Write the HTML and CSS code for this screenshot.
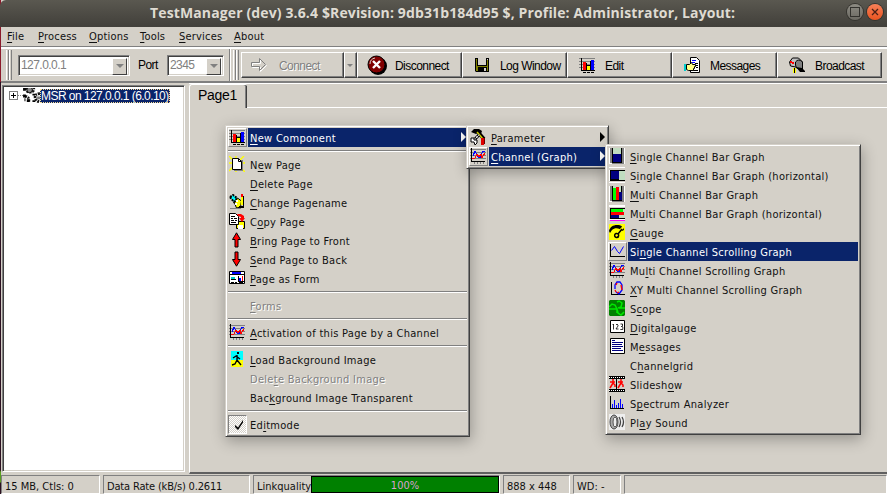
FILE: index.html
```html
<!DOCTYPE html>
<html lang="en">
<head>
<meta charset="utf-8">
<title>TestManager</title>
<link rel="stylesheet" href="styles.css">
</head>
<body>
<svg class="defs" width="0" height="0">
  <symbol id="bars" viewBox="0 0 16 16"><path fill="#808080" d="M0 1h16v1H0zM0 4h16v1H0zM0 7h16v1H0zM0 10h16v1H0z"/><path d="M2 1h1v12h13v1H2zM4 15h3v1H4zM8 15h3v1H8zM12 15h3v1h-3z"/><path fill="#f00" d="M4 5h3v8H4z"/><path fill="#ff0" d="M8 9h3v4H8z"/><path fill="#00f" d="M12 3h3v10h-3z"/><path d="M7 6h1v7H7zM8 8h3v1H8zM11 4h1v9h-1z"/></symbol>
  <symbol id="newpage" viewBox="0 0 16 16"><path stroke="#ff0" stroke-width="1.400" d="M0 0l16 16M15 0L0 15M7 0v16M0 7h16"/><path fill="#808080" d="M5 4h9v11H5z"/><path fill="#fff" stroke="#000" d="M3.500 2.500h6l3 3v8h-9z"/><path fill="none" stroke="#000" d="M9.500 2.500v3h3"/></symbol>
  <symbol id="rename" viewBox="0 0 16 16"><path fill="#ff0" stroke="#000" d="M5.500 9l3-5 4 3-1 6-4 1z"/><path fill="#0ff" stroke="#000" stroke-width="2" stroke-dasharray="2 1" d="M1 3l3-2 4 3-3 4z"/><path fill="#fff" d="M7 6h2v2H7zM6 9h2v2H6z"/><path fill="#f00" d="M12 0h2v3h-2z"/><path fill="#ff0" d="M12 3h2v8h-2z"/><path d="M14 2h1v12h-2v-2h1zM10 12h3v2h-3z"/><path fill="#808080" d="M1 14h11v1H1z"/></symbol>
  <symbol id="copy" viewBox="0 0 16 16"><path fill="#ff0" stroke="#000" d="M7.500 8.500h8v7h-8z"/><path fill="#fff" d="M9 12h5v4H9z"/><path fill="#fff" stroke="#000" d="M.5.5h6l3 3v8h-9z"/><path d="M2 3h4v1H2zM2 5h2v1H2zM5 5h3v1H5zM2 7h3v1H2zM6 7h2v1H6zM2 9h5v1H2z"/><path fill="#f00" d="M8 1h4l3 2v2h1l-3 4-3-4h2V4L9 3z"/></symbol>
  <symbol id="up" viewBox="0 0 16 16"><path fill="#f00" stroke="#000" d="M7.500.8l4 6.700H9V15H6V7.500H3.500z"/></symbol>
  <symbol id="down" viewBox="0 0 16 16"><path fill="#f00" stroke="#000" d="M7.500 15.200l4-6.700H9V1H6v7.500H3.500z"/></symbol>
  <symbol id="form" viewBox="0 0 16 16"><path fill="#fff" stroke="#000" d="M.5 1.500h15v12H.5z"/><path fill="#00f" d="M3 2h9v2H3z"/><path d="M1 4h14v1H1zM2 9h5v1H2zM9 6h1v5h5v1H9zM2 12h3v1H2zM6 12h2v1H6zM10 12h4v1h-4z"/><path fill="#0cc" d="M2 7h4v2H2z"/><path fill="#00f" d="M10 8h2v3h-2z"/><path fill="#f00" d="M13 6h1v5h-1z"/></symbol>
  <symbol id="graph" viewBox="0 0 16 16"><path fill="#808080" d="M0 1h16v1H0zM0 4h16v1H0zM0 7h16v1H0zM0 10h16v1H0zM4 14h1v2H4zM7 14h1v2H7zM10 14h1v2h-1zM13 14h1v2h-1z"/><path d="M1 0h1v13h13v1H1z"/><g class="crisp" fill="none"><path stroke="#00f" d="M3 8l2-5 3 6 2 1 3-7h2"/><path stroke="#f00" d="M2 11l3-1 2-4 2 3 2-3 1 4 3-5"/></g></symbol>
  <symbol id="walk" viewBox="0 0 16 16"><path fill="#0ff" d="M2 0h12v9H2z"/><path fill="#ff0" d="M2 9h12v7H2z"/><path d="M8 1h2v2H8z"/><path fill="none" stroke="#000" stroke-width="1.400" d="M8 4v5l4 5M8 9l-2 4-3 1M4 7l3-2 4 3"/></symbol>
  <symbol id="check" viewBox="0 0 16 16"><path d="M6 9l3 2.500 5-7.500v2.500L9 14 6 11z"/></symbol>
  <symbol id="tools" viewBox="0 0 16 16"><path d="M1 3l3-3h5l3 2-1 3-2-2-3 2z"/><path stroke="#000" stroke-width="3.500" d="M7 2l7 8"/><path stroke="#cc0" stroke-width="1.500" d="M7 3l6 7"/><path stroke="#000" stroke-width="3" d="M3 12l6-6"/><path stroke="#fff" stroke-width="1.500" stroke-dasharray="2 1" d="M2 13l7-7"/><path fill="#fff" stroke="#000" d="M1 9h3v2h3v3l-2 2-1-3H1z"/><path fill="#d00" d="M11 9h3v7h-3z"/><path fill="#600" d="M14 9h1v6h-1z"/></symbol>
  <symbol id="sbar" viewBox="0 0 16 16"><path fill="#fff" d="M0 0h16v16H0z"/><path fill="#808080" d="M1 0h14v16H3v-1H1z"/><path d="M3 0h10v15H3z"/><path fill="#c0dcc0" d="M4 0h8v6H4z"/><path fill="#000080" d="M4 6h8v8H4z"/></symbol>
  <symbol id="sbarh" viewBox="0 0 16 16"><path fill="#fff" d="M0 0h16v16H0z"/><path fill="#d4d0c8" d="M0 1h16v2H0zM0 14h16v1H0z"/><path d="M1 3h15v11H1z"/><path fill="#000080" d="M2 4h8v8H2z"/><path fill="#c0dcc0" d="M10 4h6v9h-6z"/></symbol>
  <symbol id="mbar" viewBox="0 0 16 16"><path fill="#fff" d="M0 0h16v16H0z"/><path fill="#808080" d="M1 0h14v16H3v-1H1z"/><path d="M3 0h10v15H3z"/><path fill="#c0dcc0" d="M4 0h8v6H4z"/><path fill="#0f0" d="M4 2h3v12H4z"/><path fill="#f00" d="M7 1h3v13H7z"/><path fill="#000080" d="M10 6h3v8h-3z"/></symbol>
  <symbol id="mbarh" viewBox="0 0 16 16"><path fill="#fff" d="M0 0h16v2H0z"/><path d="M1 3h15v11H1z"/><path fill="#c0dcc0" d="M10 4h6v9h-6z"/><path fill="#0f0" d="M2 4h12v3H2z"/><path fill="#f00" d="M2 7h13v3H2z"/><path fill="#000080" d="M2 10h8v3H2z"/><path fill="#fff" d="M0 14h16v1H0z"/><path fill="#f0f" d="M1 15h15v1H1z"/></symbol>
  <symbol id="gauge" viewBox="0 0 16 16"><path fill="#ff0" d="M0 0h16v16H0z"/><path d="M0 7C1 3 4 1 8 1s7 2 7 5l-2 1c-2-3-7-4-10-1L1 9z"/><path stroke="#ff0" stroke-width="2" d="M9 9l6-7"/><path fill="none" stroke="#000" stroke-width="1.500" d="M9 10l4-5M9 10a2 2 0 1 0 .1.100M9 12v2"/></symbol>
  <symbol id="line" viewBox="0 0 16 16"><path d="M1 1h1v12h14v1H1z"/><path fill="none" stroke="#00f" d="M2.500 7.500l3-4 3 5 2 2 4-7"/></symbol>
  <symbol id="xy" viewBox="0 0 16 16"><path d="M2 1h1v12h13v1H2z"/><path fill="none" stroke="#00f" stroke-width="1.300" d="M6 8V4l2-3h3l2 3v5l-3 4-3-2"/><path fill="none" stroke="#f00" stroke-width="1.300" d="M6 9l1 2M7 4l1-2M12 4l1 5M8 12l2-1"/></symbol>
  <symbol id="scope" viewBox="0 0 16 16"><path fill="#008000" d="M1 0h14l1 1v14l-1 1H1l-1-1V1z"/><path fill="none" stroke="#00e800" stroke-width="1.500" d="M0 7l3-3 3 1 2 4 1 4 3 2 3-3M8 2l2-1 3 2-1 4-3 1M0 9h8v4M10 8h6"/></symbol>
  <symbol id="digits" viewBox="0 0 16 16"><path fill="#fff" stroke="#000" d="M1.500 1.500h14v12h-14z"/><path fill="none" stroke="#000" stroke-width=".8" d="M3.500 6l1-1v5.500M7 6l1-1 1 1v1l-2 3h2.500M11.500 5h2v2.500h-1.500M13.800 8v2.500h-2.500"/></symbol>
  <symbol id="text" viewBox="0 0 16 16"><path fill="#fff" stroke="#000" d="M1.500.5h14v15h-14z"/><path fill="#000080" d="M3 2h3v1H3zM3 4h11v1H3zM3 6h10v1H3zM3 8h11v1H3zM3 10h9v1H3zM3 12h11v1H3z"/></symbol>
  <symbol id="film" viewBox="0 0 16 16"><path d="M0 0h16v16H0z"/><path fill="#d4d0c8" d="M0 3h7v10H0zM8 3h8v10H8z"/><path stroke="#fff" stroke-dasharray="1 1" d="M0 1.500h16M0 14.500h16"/><path fill="none" stroke="#f00" stroke-width="1.500" d="M4 3v4l2 2v2M4 7l-3 5M1 6h5M12 3v4l2 2v2M12 7l-3 5M9 6h5"/></symbol>
  <symbol id="spectrum" viewBox="0 0 16 16"><path d="M1 1h1v12h13v1H1z"/><path fill="#00f" d="M3 9h1v4H3zM5 5h1v8H5zM7 10h1v3H7zM9 8h1v5H9zM11 4h1v9h-1zM13 9h1v4h-1z"/></symbol>
  <symbol id="sound" viewBox="0 0 16 16"><path fill="#eee" d="M0 0h16v16H0z"/><ellipse cx="5" cy="8" rx="4" ry="7" fill="#aaa" stroke="#444"/><ellipse cx="6" cy="8" rx="2" ry="5" fill="#eee" stroke="#555"/><path fill="none" stroke="#444" stroke-width="1.300" d="M10 3q3 5 0 10M13 3q3 5 0 10"/></symbol>
  <symbol id="arrow" viewBox="0 0 16 16"><path fill="none" stroke="#fff" d="M1.500 6.500h8v-4l6 6-6 6v-4h-8z"/><path fill="none" stroke="#808080" d="M.5 5.500h8v-4l6 6-6 6v-4h-8z"/></symbol>
  <symbol id="stop" viewBox="0 0 20 20"><circle cx="11" cy="11" r="9"/><circle cx="9.500" cy="9.500" r="8.500" fill="#800000" stroke="#000"/><path fill="none" stroke="#d4d0c8" d="M3 9q0-5 5-6"/><path stroke="#fff" stroke-width="2.400" d="M6 6l7 7M13 6l-7 7"/></symbol>
  <symbol id="disk" viewBox="0 0 16 16"><path d="M1 1h14v14H2l-1-1z"/><path fill="#808000" d="M2 2h12v12H2z"/><path fill="#d4d0c8" d="M4 1h8v7H4zM13 2h1v1h-1z"/><path d="M3 1h1v7h8V1h1v8H3zM4 10h9v5H4z"/><path fill="#d4d0c8" d="M10 11h2v3h-2z"/></symbol>
  <symbol id="handpage" viewBox="0 0 16 16"><path fill="#fff" stroke="#000" d="M6.500.5h6l3 3v12h-9z"/><path fill="#00f" d="M8 3h4v1H8zM8 5h3v1H8z"/><path d="M11 6h3v1h-3zM12 8h2v1h-2zM12 10h2v1h-2zM9 13h5v1H9z"/><path fill="#ff8" stroke="#000" d="M2.500 7.500h3l2-2 1 2h3v2h-1v2h-1v2h-5l-2-1z"/><path fill="#0cc" d="M0 7h2v7H0z"/></symbol>
  <symbol id="mailbox" viewBox="0 0 16 16"><path fill="#ff0" d="M4 11h3v5H4z"/><path stroke="#000" d="M5.500 11v5"/><path fill="#c0c0c0" stroke="#000" d="M.5 5l3-4 6 0 4 4v7l-2-1-10-2z"/><path fill="#808080" stroke="#000" d="M6.500 8V5q3-4 7 0v8l-6-2z"/><path d="M7 10l6 1 3 3v1h-5z"/><path fill="#f00" d="M1 4h2v1h2v2H3V6H1z"/></symbol>
  <symbol id="gears" viewBox="0 0 18 16"><path fill="none" stroke="#111" stroke-width="3" stroke-dasharray="2 1" d="M4 0a4 3 0 1 0 7 0M2 9q5 0 4 6M18 6q-6 0-5 5 1 3 5 4"/><circle cx="7" cy="2" r="3" fill="#888" stroke="#000"/><path d="M0 0h3v3H0zM0 7h3v3H0zM4 12h3v3H4zM10 6h3v2h-3zM10 13h3v2h-3z"/><path fill="#777" d="M1 11h2v3H1zM15 9h3v3h-3z"/></symbol>
</svg>
<div class="window">
  <header class="titlebar"><h1>TestManager (dev) 3.6.4 $Revision: 9db31b184d95 $, Profile: Administrator, Layout:</h1>
    <div class="winbtns"><i class="wb max"></i><i class="wb close"><svg viewBox="0 0 16 16"><path stroke="#4a2015" stroke-width="1.300" d="M5 5l6 6M11 5l-6 6"/></svg></i></div>
  </header>
  <nav class="menubar"><span class="m1"><u>F</u>ile</span><span class="m2"><u>P</u>rocess</span><span class="m3"><u>O</u>ptions</span><span class="m4"><u>T</u>ools</span><span class="m5"><u>S</u>ervices</span><span class="m6"><u>A</u>bout</span></nav>
  <div class="toolbar">
    <div class="band conn"><i class="grip"></i><div class="combo host"><span>127.0.0.1</span><b></b></div><span class="port">Port</span><div class="combo num"><span>2345</span><b></b></div></div>
    <div class="band"><i class="grip"></i>
      <div class="btn off connect"><svg><use href="#arrow"/></svg><span>Connect</span></div><div class="btn off drop"></div>
      <div class="btn"><svg class="big"><use href="#stop"/></svg><span>Disconnect</span></div>
      <div class="btn"><svg><use href="#disk"/></svg><span>Log Window</span></div>
      <div class="btn"><svg><use href="#bars"/></svg><span>Edit</span></div>
      <div class="btn"><svg><use href="#handpage"/></svg><span>Messages</span></div>
      <div class="btn"><svg><use href="#mailbox"/></svg><span>Broadcast</span></div>
    </div>
  </div>
  <main class="work">
    <aside class="tree"><div class="node"><i class="plus"></i><i class="dots"></i><svg><use href="#gears"/></svg><span>MSR on 127.0.0.1 (6.0.10)</span></div></aside>
    <section class="pages"><div class="tabs"><div class="tab">Page1</div><div class="rest"></div></div><div class="page"></div></section>
  </main>
  <footer class="status"><div class="s1">15 MB, Ctls: 0</div><div class="s2">Data Rate (kB/s) 0.2611</div><div class="s3"><span>Linkquality</span><b>100%</b></div><div class="s4">888 x 448</div><div class="s5">WD: -</div><div class="s6"></div></footer>
</div>

<div class="menu first">
  <div class="item on"><i><svg><use href="#bars"/></svg></i><span><u>N</u>ew Component</span><em></em></div>
  <hr>
  <div class="item"><i><svg><use href="#newpage"/></svg></i><span>N<u>e</u>w Page</span></div>
  <div class="item"><i></i><span><u>D</u>elete Page</span></div>
  <div class="item"><i><svg><use href="#rename"/></svg></i><span><u>C</u>hange Pagename</span></div>
  <div class="item"><i><svg><use href="#copy"/></svg></i><span>C<u>o</u>py Page</span></div>
  <div class="item"><i><svg><use href="#up"/></svg></i><span><u>B</u>ring Page to Front</span></div>
  <div class="item"><i><svg><use href="#down"/></svg></i><span><u>S</u>end Page to Back</span></div>
  <div class="item"><i><svg><use href="#form"/></svg></i><span><u>P</u>age as Form</span></div>
  <hr>
  <div class="item off"><i></i><span><u>F</u>orms</span></div>
  <hr>
  <div class="item"><i><svg><use href="#graph"/></svg></i><span><u>A</u>ctivation of this Page by a Channel</span></div>
  <hr>
  <div class="item"><i><svg><use href="#walk"/></svg></i><span><u>L</u>oad Background Image</span></div>
  <div class="item off"><i></i><span>Dele<u>t</u>e Background Image</span></div>
  <div class="item"><i></i><span>Bac<u>k</u>ground Image Transparent</span></div>
  <hr>
  <div class="item checked"><i><svg><use href="#check"/></svg></i><span>Ed<u>i</u>tmode</span></div>
</div>
<div class="menu second">
  <div class="item"><i><svg><use href="#tools"/></svg></i><span><u>P</u>arameter</span><em></em></div>
  <div class="item on"><i><svg><use href="#graph"/></svg></i><span><u>C</u>hannel (Graph)</span><em></em></div>
</div>
<div class="menu third">
  <div class="item"><i><svg><use href="#sbar"/></svg></i><span><u>S</u>ingle Channel Bar Graph</span></div>
  <div class="item"><i><svg><use href="#sbarh"/></svg></i><span>S<u>i</u>ngle Channel Bar Graph (horizontal)</span></div>
  <div class="item"><i><svg><use href="#mbar"/></svg></i><span><u>M</u>ulti Channel Bar Graph</span></div>
  <div class="item"><i><svg><use href="#mbarh"/></svg></i><span>M<u>u</u>lti Channel Bar Graph (horizontal)</span></div>
  <div class="item"><i><svg><use href="#gauge"/></svg></i><span><u>G</u>auge</span></div>
  <div class="item on"><i><svg><use href="#line"/></svg></i><span>Si<u>n</u>gle Channel Scrolling Graph</span></div>
  <div class="item"><i><svg><use href="#graph"/></svg></i><span>Mu<u>l</u>ti Channel Scrolling Graph</span></div>
  <div class="item"><i><svg><use href="#xy"/></svg></i><span><u>X</u>Y Multi Channel Scrolling Graph</span></div>
  <div class="item"><i><svg><use href="#scope"/></svg></i><span>S<u>c</u>ope</span></div>
  <div class="item"><i><svg><use href="#digits"/></svg></i><span><u>D</u>igitalgauge</span></div>
  <div class="item"><i><svg><use href="#text"/></svg></i><span>M<u>e</u>ssages</span></div>
  <div class="item"><i></i><span>C<u>h</u>annelgrid</span></div>
  <div class="item"><i><svg><use href="#film"/></svg></i><span>Slidesh<u>o</u>w</span></div>
  <div class="item"><i><svg><use href="#spectrum"/></svg></i><span>S<u>p</u>ectrum Analyzer</span></div>
  <div class="item"><i><svg><use href="#sound"/></svg></i><span>Pl<u>a</u>y Sound</span></div>
</div>
</body>
</html>
```
FILE: styles.css
```css
* { box-sizing: border-box; }
body { margin: 0; width: 887px; height: 494px; overflow: hidden; position: relative; background: #2b1020; font: 11px "DejaVu Sans Condensed", "DejaVu Sans", sans-serif; font-stretch: condensed; color: #111; }
.defs { position: absolute; }
.crisp { shape-rendering: crispEdges; }
svg { display: block; width: 16px; height: 16px; flex: none; }
.window { height: 494px; display: flex; flex-direction: column; padding-left: 1px; background: linear-gradient(#8b1a2b 82px, #2b1020 82px 470px, #5aa020 472px 482px, #2b1020 483px) 0 0 / 1px 100% no-repeat, #d4d0c8; }
.titlebar { height: 27px; flex: none; margin-left: -1px; padding-left: 150px; display: flex; align-items: center; justify-content: space-between; background: linear-gradient(#5a5850, #413f3a); border-radius: 6px 0 0 0; color: #dfdbd2; }
h1 { margin: -3px 0 0; font: bold 14px "Open Sans", sans-serif; letter-spacing: .13px; white-space: nowrap; }
.winbtns { display: flex; gap: 4px; padding: 0 4px 3px 0; }
.wb { width: 16px; height: 16px; border-radius: 50%; background: linear-gradient(#8d8b83, #6b6962); box-shadow: 0 0 0 1px #35342f; display: grid; place-items: center; }
.max::after { content: ""; width: 8px; height: 8px; border: 1px solid #33322e; }
.close { background: linear-gradient(#f68058, #e95420); }
.menubar { height: 20px; flex: none; display: flex; padding-left: 6px; line-height: 20px; letter-spacing: .2px; border-bottom: 1px solid #808080; }
.m1 { width: 31px; } .m2 { width: 51px; } .m3 { width: 51px; } .m4 { width: 39px; } .m5 { width: 55px; }
u { text-decoration: underline; text-underline-offset: 2px; text-decoration-thickness: 1px; text-decoration-skip-ink: none; }
.toolbar { height: 36px; flex: none; display: flex; border-top: 2px solid #fff; border-bottom: 2px solid #808080; font: 12px "Liberation Sans", sans-serif; letter-spacing: -.55px; color: #000; }
.band { display: flex; align-items: center; padding: 2px 0 2px 3px; }
.conn { width: 229px; flex: none; padding-left: 5px; border-right: 1px solid #808080; box-shadow: 1px 0 #fff; }
.grip { width: 6px; height: 30px; flex: none; margin-right: 2px; background: linear-gradient(90deg, #fff 1px, #d4d0c8 1px 2px, #808080 2px 3px, #fff 3px 4px, #d4d0c8 4px 5px, #808080 5px); }
.conn .grip { margin-right: 6px; }
.combo { height: 21px; display: flex; justify-content: space-between; background: #fff; border: 1px solid; border-color: #808080 #fff #fff #808080; box-shadow: inset 1px 1px #404040, inset -1px -1px #d4d0c8; padding: 2px 2px 2px 2px; color: #808080; line-height: 15px; }
.host { width: 112px; } .num { width: 57px; }
.combo b { width: 15px; height: 17px; background: #d4d0c8; border: 1px solid; border-color: #fff #404040 #404040 #fff; position: relative; }
.combo b::after, .drop::after { content: ""; position: absolute; left: 3px; top: 5px; border: 4px solid transparent; border-top-color: #808080; border-bottom: 0; }
.port { width: 37px; padding-left: 8px; }
.btn { width: 105px; height: 26px; flex: none; display: flex; align-items: center; gap: 10px; padding-left: 11px; border: 1px solid; border-color: #fff #404040 #404040 #fff; box-shadow: inset -1px -1px #808080; white-space: nowrap; }
.btn span { padding-top: 2px; }
.btn .big { width: 20px; height: 20px; margin: 0 -2px; }
.connect { width: 103px; padding-left: 9px; gap: 12px; }
.drop { width: 13px; position: relative; }
.drop::after { left: 2px; top: 11px; border-width: 3px 3px 0; }
.off { color: #808080; text-shadow: 1px 1px #fff; }
.work { flex: 1; display: flex; min-height: 0; }
.tree { width: 183px; margin: 2px 4px 2px 1px; background: #fff; border: 1px solid; border-color: #808080 #fff #fff #808080; box-shadow: inset 1px 1px #404040, inset -1px -1px #d4d0c8; font: 12px "Liberation Sans", sans-serif; letter-spacing: -.55px; }
.node { display: flex; align-items: center; padding: 2px 0 0 6px; height: 17px; }
.node svg { width: 17px; height: 15px; }
.node span { background: #0a246a; color: #fff; outline: 1px dotted #f5db95; outline-offset: -1px; padding: 0 1px; line-height: 14px; white-space: nowrap; }
.plus { width: 9px; height: 9px; border: 1px solid #808080; background: linear-gradient(#000, #000) center / 5px 1px no-repeat, linear-gradient(#000, #000) center / 1px 5px no-repeat; }
.dots { width: 5px; border-top: 1px dotted #808080; }
.pages { flex: 1; display: flex; flex-direction: column; border-top: 1px solid #fff; }
.tabs { display: flex; height: 24px; }
.tab { width: 58px; border: 1px solid #fff; border-width: 1px 0 0 1px; border-radius: 3px 2px 0 0; box-shadow: inset -1px 0 #404040, inset -2px 0 #808080; padding-left: 8px; font: 14px/21px "Liberation Sans", sans-serif; letter-spacing: -.3px; color: #000; }
.rest { flex: 1; border-bottom: 1px solid #fff; }
.page { flex: 1; border-left: 1px solid #fff; border-bottom: 2px solid #606060; }
.status { height: 20px; flex: none; display: flex; gap: 3px; line-height: 21px; padding-top: 1px; }
.status div { border: 1px solid; border-color: #808080 #fff #fff #808080; padding-left: 3px; white-space: nowrap; }
.s1 { width: 99px; } .s2 { width: 147px; letter-spacing: -.17px; } .s3 { width: 247px; display: flex; } .s4 { width: 67px; } .s5 { width: 48px; } .s6 { flex: 1; }
.s3 span { width: 54px; overflow: hidden; flex: none; }
.s3 b { width: 189px; height: 17px; background: #008000; border: 1px solid #000; color: #d9a0d0; font-weight: normal; text-align: center; line-height: 17px; }
.menu { position: absolute; background: #d4d0c8; padding: 2px; border: 1px solid; border-color: #d4d0c8 #404040 #404040 #d4d0c8; box-shadow: inset 1px 1px #fff, inset -1px -1px #808080, 1px 4px 14px rgba(0,0,0,.3); }
.first { left: 225px; top: 125px; width: 245px; height: 312px; }
.second { left: 466px; top: 125px; width: 143px; height: 44px; }
.third { left: 605px; top: 144px; width: 256px; height: 291px; }
.item { height: 19px; display: flex; line-height: 21px; letter-spacing: .29px; white-space: nowrap; position: relative; }
.item i { width: 19px; height: 19px; margin-right: 1px; padding: 1px; flex: none; }
.item span { flex: 1; padding-left: 2px; }
.on i { border: 1px solid; border-color: #fff #808080 #808080 #fff; padding: 0; }
.on span { background: #0a246a; color: #fff; }
.checked i { border: 1px solid; border-color: #808080 #fff #fff #808080; padding: 0; background: repeating-conic-gradient(#fff 0 25%, #d4d0c8 0 50%) 0 0 / 2px 2px; }
.item em { position: absolute; right: 1px; top: 4px; border: 5px solid transparent; border-left-color: #000; border-right: 0; }
.on em { border-left-color: #fff; }
hr { height: 2px; margin: 3px 0; border: 0; border-top: 1px solid #808080; border-bottom: 1px solid #fff; }
```
